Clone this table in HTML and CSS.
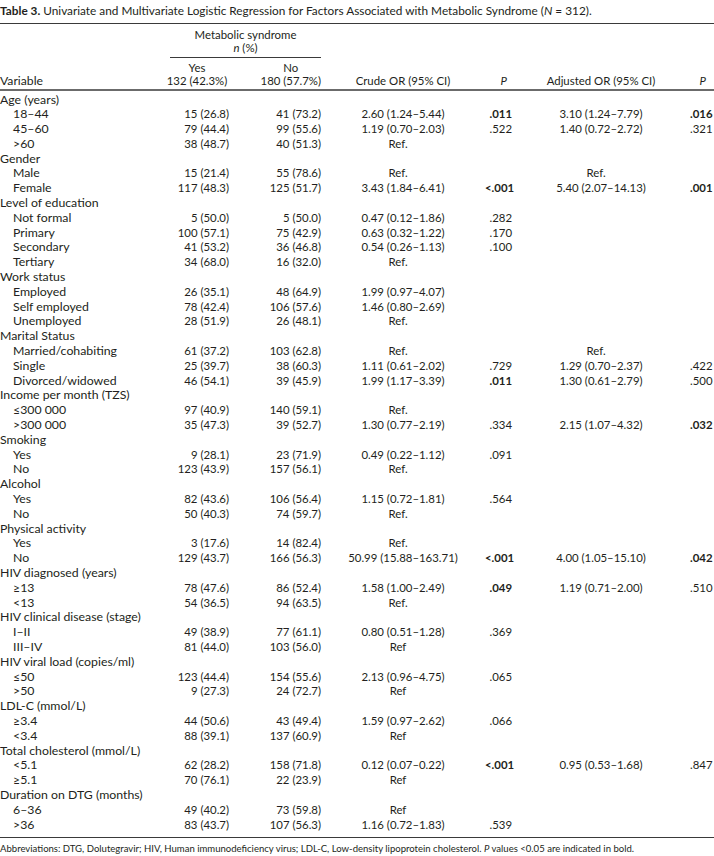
FILE: index.html
```html
<!DOCTYPE html>
<html>
<head>
<meta charset="utf-8">
<link rel="stylesheet" href="styles.css">
</head>
<body>
<div class="caption"><b>Table 3.</b> Univariate and Multivariate Logistic Regression for Factors Associated with Metabolic Syndrome (<i>N</i> = 312).</div>
<div class="rule-top"></div>
<table class="tbl">
<colgroup>
<col class="c-var"><col class="c-yes"><col class="c-no"><col class="c-crude"><col class="c-p1"><col class="c-adj"><col class="c-p2">
</colgroup>
<thead>
<tr>
<th class="h-var" rowspan="2">Variable</th>
<th class="h-group" colspan="2"><div class="group-inner">Metabolic syndrome<br><i>n</i> (%)</div></th>
<th class="h-crude" rowspan="2">Crude OR (95% CI)</th>
<th class="h-p1" rowspan="2"><i>P</i></th>
<th class="h-adj" rowspan="2">Adjusted OR (95% CI)</th>
<th class="h-p2" rowspan="2"><i>P</i></th>
</tr>
<tr>
<th class="h-yes">Yes<br>132 (42.3%)</th>
<th class="h-no"><span class="stack">No<br>180 (57.7%)</span></th>
</tr>
</thead>
<tbody>
<tr class="first"><td class="grp" colspan="7">Age (years)</td></tr>
<tr><td class="sub">18–44</td><td>15 (26.8)</td><td>41 (73.2)</td><td class="or">2.60 (1.24–5.44)</td><td class="p"><b>.011</b></td><td class="or">3.10 (1.24–7.79)</td><td class="p"><b>.016</b></td></tr>
<tr><td class="sub">45–60</td><td>79 (44.4)</td><td>99 (55.6)</td><td class="or">1.19 (0.70–2.03)</td><td class="p">.522</td><td class="or">1.40 (0.72–2.72)</td><td class="p">.321</td></tr>
<tr><td class="sub">&gt;60</td><td>38 (48.7)</td><td>40 (51.3)</td><td class="or ref">Ref.</td><td class="p"></td><td class="or"></td><td class="p"></td></tr>
<tr><td class="grp" colspan="7">Gender</td></tr>
<tr><td class="sub">Male</td><td>15 (21.4)</td><td>55 (78.6)</td><td class="or ref">Ref.</td><td class="p"></td><td class="or ref">Ref.</td><td class="p"></td></tr>
<tr><td class="sub">Female</td><td>117 (48.3)</td><td>125 (51.7)</td><td class="or">3.43 (1.84–6.41)</td><td class="p"><b>&lt;.001</b></td><td class="or">5.40 (2.07–14.13)</td><td class="p"><b>.001</b></td></tr>
<tr><td class="grp" colspan="7">Level of education</td></tr>
<tr><td class="sub">Not formal</td><td>5 (50.0)</td><td>5 (50.0)</td><td class="or">0.47 (0.12–1.86)</td><td class="p">.282</td><td class="or"></td><td class="p"></td></tr>
<tr><td class="sub">Primary</td><td>100 (57.1)</td><td>75 (42.9)</td><td class="or">0.63 (0.32–1.22)</td><td class="p">.170</td><td class="or"></td><td class="p"></td></tr>
<tr><td class="sub">Secondary</td><td>41 (53.2)</td><td>36 (46.8)</td><td class="or">0.54 (0.26–1.13)</td><td class="p">.100</td><td class="or"></td><td class="p"></td></tr>
<tr><td class="sub">Tertiary</td><td>34 (68.0)</td><td>16 (32.0)</td><td class="or ref">Ref.</td><td class="p"></td><td class="or"></td><td class="p"></td></tr>
<tr><td class="grp" colspan="7">Work status</td></tr>
<tr><td class="sub">Employed</td><td>26 (35.1)</td><td>48 (64.9)</td><td class="or">1.99 (0.97–4.07)</td><td class="p"></td><td class="or"></td><td class="p"></td></tr>
<tr><td class="sub">Self employed</td><td>78 (42.4)</td><td>106 (57.6)</td><td class="or">1.46 (0.80–2.69)</td><td class="p"></td><td class="or"></td><td class="p"></td></tr>
<tr><td class="sub">Unemployed</td><td>28 (51.9)</td><td>26 (48.1)</td><td class="or ref">Ref.</td><td class="p"></td><td class="or"></td><td class="p"></td></tr>
<tr><td class="grp" colspan="7">Marital Status</td></tr>
<tr><td class="sub">Married/cohabiting</td><td>61 (37.2)</td><td>103 (62.8)</td><td class="or ref">Ref.</td><td class="p"></td><td class="or ref">Ref.</td><td class="p"></td></tr>
<tr><td class="sub">Single</td><td>25 (39.7)</td><td>38 (60.3)</td><td class="or">1.11 (0.61–2.02)</td><td class="p">.729</td><td class="or">1.29 (0.70–2.37)</td><td class="p">.422</td></tr>
<tr><td class="sub">Divorced/widowed</td><td>46 (54.1)</td><td>39 (45.9)</td><td class="or">1.99 (1.17–3.39)</td><td class="p"><b>.011</b></td><td class="or">1.30 (0.61–2.79)</td><td class="p">.500</td></tr>
<tr><td class="grp" colspan="7">Income per month (TZS)</td></tr>
<tr><td class="sub">≤300 000</td><td>97 (40.9)</td><td>140 (59.1)</td><td class="or ref">Ref.</td><td class="p"></td><td class="or"></td><td class="p"></td></tr>
<tr><td class="sub">&gt;300 000</td><td>35 (47.3)</td><td>39 (52.7)</td><td class="or">1.30 (0.77–2.19)</td><td class="p">.334</td><td class="or">2.15 (1.07–4.32)</td><td class="p"><b>.032</b></td></tr>
<tr><td class="grp" colspan="7">Smoking</td></tr>
<tr><td class="sub">Yes</td><td>9 (28.1)</td><td>23 (71.9)</td><td class="or">0.49 (0.22–1.12)</td><td class="p">.091</td><td class="or"></td><td class="p"></td></tr>
<tr><td class="sub">No</td><td>123 (43.9)</td><td>157 (56.1)</td><td class="or ref">Ref.</td><td class="p"></td><td class="or"></td><td class="p"></td></tr>
<tr><td class="grp" colspan="7">Alcohol</td></tr>
<tr><td class="sub">Yes</td><td>82 (43.6)</td><td>106 (56.4)</td><td class="or">1.15 (0.72–1.81)</td><td class="p">.564</td><td class="or"></td><td class="p"></td></tr>
<tr><td class="sub">No</td><td>50 (40.3)</td><td>74 (59.7)</td><td class="or ref">Ref.</td><td class="p"></td><td class="or"></td><td class="p"></td></tr>
<tr><td class="grp" colspan="7">Physical activity</td></tr>
<tr><td class="sub">Yes</td><td>3 (17.6)</td><td>14 (82.4)</td><td class="or ref">Ref.</td><td class="p"></td><td class="or"></td><td class="p"></td></tr>
<tr><td class="sub">No</td><td>129 (43.7)</td><td>166 (56.3)</td><td class="or">50.99 (15.88–163.71)</td><td class="p"><b>&lt;.001</b></td><td class="or">4.00 (1.05–15.10)</td><td class="p"><b>.042</b></td></tr>
<tr><td class="grp" colspan="7">HIV diagnosed (years)</td></tr>
<tr><td class="sub">≥13</td><td>78 (47.6)</td><td>86 (52.4)</td><td class="or">1.58 (1.00–2.49)</td><td class="p"><b>.049</b></td><td class="or">1.19 (0.71–2.00)</td><td class="p">.510</td></tr>
<tr><td class="sub">&lt;13</td><td>54 (36.5)</td><td>94 (63.5)</td><td class="or ref">Ref.</td><td class="p"></td><td class="or"></td><td class="p"></td></tr>
<tr><td class="grp" colspan="7">HIV clinical disease (stage)</td></tr>
<tr><td class="sub">I–II</td><td>49 (38.9)</td><td>77 (61.1)</td><td class="or">0.80 (0.51–1.28)</td><td class="p">.369</td><td class="or"></td><td class="p"></td></tr>
<tr><td class="sub">III–IV</td><td>81 (44.0)</td><td>103 (56.0)</td><td class="or ref">Ref</td><td class="p"></td><td class="or"></td><td class="p"></td></tr>
<tr><td class="grp" colspan="7">HIV viral load (copies/ml)</td></tr>
<tr><td class="sub">≤50</td><td>123 (44.4)</td><td>154 (55.6)</td><td class="or">2.13 (0.96–4.75)</td><td class="p">.065</td><td class="or"></td><td class="p"></td></tr>
<tr><td class="sub">&gt;50</td><td>9 (27.3)</td><td>24 (72.7)</td><td class="or ref">Ref</td><td class="p"></td><td class="or"></td><td class="p"></td></tr>
<tr><td class="grp" colspan="7">LDL-C (mmol/L)</td></tr>
<tr><td class="sub">≥3.4</td><td>44 (50.6)</td><td>43 (49.4)</td><td class="or">1.59 (0.97–2.62)</td><td class="p">.066</td><td class="or"></td><td class="p"></td></tr>
<tr><td class="sub">&lt;3.4</td><td>88 (39.1)</td><td>137 (60.9)</td><td class="or ref">Ref</td><td class="p"></td><td class="or"></td><td class="p"></td></tr>
<tr><td class="grp" colspan="7">Total cholesterol (mmol/L)</td></tr>
<tr><td class="sub">&lt;5.1</td><td>62 (28.2)</td><td>158 (71.8)</td><td class="or">0.12 (0.07–0.22)</td><td class="p"><b>&lt;.001</b></td><td class="or">0.95 (0.53–1.68)</td><td class="p">.847</td></tr>
<tr><td class="sub">≥5.1</td><td>70 (76.1)</td><td>22 (23.9)</td><td class="or ref">Ref</td><td class="p"></td><td class="or"></td><td class="p"></td></tr>
<tr><td class="grp" colspan="7">Duration on DTG (months)</td></tr>
<tr><td class="sub">6–36</td><td>49 (40.2)</td><td>73 (59.8)</td><td class="or ref">Ref</td><td class="p"></td><td class="or"></td><td class="p"></td></tr>
<tr class="last"><td class="sub">&gt;36</td><td>83 (43.7)</td><td>107 (56.3)</td><td class="or">1.16 (0.72–1.83)</td><td class="p">.539</td><td class="or"></td><td class="p"></td></tr>
</tbody>
</table>
<div class="footnote">Abbreviations: DTG, Dolutegravir; HIV, Human immunodeficiency virus; LDL-C, Low-density lipoprotein cholesterol. <i>P</i> values &lt;0.05 are indicated in bold.</div>
</body>
</html>
```
FILE: styles.css
```css
html, body {
  margin: 0;
  padding: 0;
  background: #fff;
}
body {
  font-family: Lato, "Open Sans", sans-serif;
  color: #231f20;
  width: 714px;
}
.caption {
  font-size: 11.8px;
  line-height: 13px;
  margin-top: 4px;
  white-space: nowrap;
}
.caption b {
  font-weight: 700;
}
.rule-top {
  margin-top: 6px;
  border-top: 1px solid #3a3a3a;
}
.tbl {
  width: 714px;
  border-collapse: separate;
  border-spacing: 0;
  table-layout: fixed;
  font-size: 11.4px;
}
.c-var { width: 165px; }
.c-yes { width: 64px; }
.c-no { width: 92px; }
.c-crude { width: 164px; }
.c-p1 { width: 27px; }
.c-adj { width: 178px; }
.c-p2 { width: 24px; }

.tbl th {
  font-weight: 400;
  line-height: 13px;
  padding: 0;
  vertical-align: bottom;
  white-space: nowrap;
}
.tbl thead tr:first-child th {
  padding-top: 3.5px;
}
.tbl thead th[rowspan],
.tbl thead tr:last-child th {
  border-bottom: 2px solid #6b6b6b;
  padding-bottom: 2px;
}
.h-var {
  text-align: left;
  font-size: 12.2px;
}
.h-group {
  text-align: center;
}
.group-inner {
  margin-left: 5px;
  padding-bottom: 3px;
  border-bottom: 1px solid #3a3a3a;
}
.h-yes {
  text-align: center;
  padding-top: 3px !important;
}
.h-no {
  text-align: right;
  padding-top: 3px !important;
}
.stack {
  display: inline-block;
  text-align: center;
}
.h-crude { text-align: center; }
.h-p1 { text-align: right; padding-right: 5px !important; }
.h-adj { text-align: center; }
.h-p2 { text-align: right; padding-right: 8px !important; }

.tbl td {
  line-height: 14.8px;
  padding: 0;
  text-align: right;
  white-space: nowrap;
}
.tbl tbody tr.first td {
  padding-top: 2px;
}
.tbl tbody tr.last td {
  padding-bottom: 5px;
  border-bottom: 1px solid #3a3a3a;
}
.tbl td.grp {
  text-align: left;
  font-size: 12.3px;
}
.tbl td.sub {
  text-align: left;
  padding-left: 13px;
  font-size: 12.3px;
}
.tbl td.or {
  text-align: center;
}
.tbl td.ref {
  padding-right: 10px;
}
.tbl td.p {
  text-align: right;
}
.tbl td.p:last-child {
  padding-right: 2px;
}
.tbl b {
  font-weight: 700;
}
.footnote {
  font-size: 9.55px;
  line-height: 13px;
  margin-top: 3.5px;
  white-space: nowrap;
}
```
